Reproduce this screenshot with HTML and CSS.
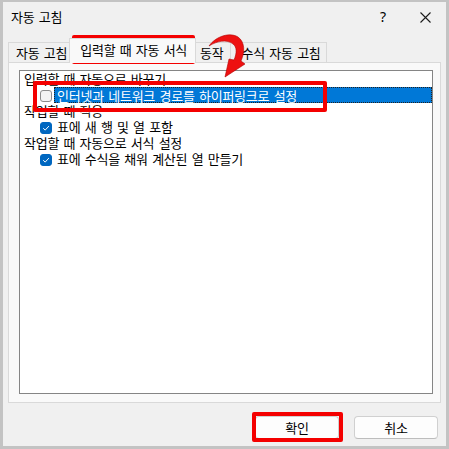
FILE: index.html
```html
<!DOCTYPE html>
<html lang="ko">
<head>
<meta charset="utf-8">
<title>자동 고침</title>
<link rel="stylesheet" href="styles.css">
</head>
<body>
<div class="frame">
  <div class="window">
    <div class="titlebar">
      <span class="title">자동 고침</span>
      <span class="help">?</span>
      <svg class="close" width="11" height="11" viewBox="0 0 11 11"><path d="M0.5 0.5 L10.5 10.5 M10.5 0.5 L0.5 10.5" stroke="#1a1a1a" stroke-width="1.1" fill="none"/></svg>
    </div>
    <div class="tabs">
      <div class="tab">자동 고침</div>
      <div class="tab active">입력할 때 자동 서식</div>
      <div class="tab">동작</div>
      <div class="tab">수식 자동 고침</div>
    </div>
    <div class="panel">
      <div class="list">
        <div class="row head">입력할 때 자동으로 바꾸기</div>
        <div class="row item">
          <span class="cb"></span>
          <span class="label selected">인터넷과 네트워크 경로를 하이퍼링크로 설정</span>
        </div>
        <div class="row head">작업할 때 적용</div>
        <div class="row item">
          <span class="cb checked"><svg width="12" height="12" viewBox="0 0 12 12"><path d="M3.2 6.2 L5.2 8.1 L8.9 4.1" stroke="#fff" stroke-width="1" fill="none"/></svg></span>
          <span class="label">표에 새 행 및 열 포함</span>
        </div>
        <div class="row head">작업할 때 자동으로 서식 설정</div>
        <div class="row item">
          <span class="cb checked"><svg width="12" height="12" viewBox="0 0 12 12"><path d="M3.2 6.2 L5.2 8.1 L8.9 4.1" stroke="#fff" stroke-width="1" fill="none"/></svg></span>
          <span class="label">표에 수식을 채워 계산된 열 만들기</span>
        </div>
      </div>
    </div>
    <div class="footer">
      <button class="btn">확인</button>
      <button class="btn">취소</button>
    </div>
  </div>
  <div class="mark mark-tab"></div>
  <div class="mark mark-row"></div>
  <div class="mark mark-ok"></div>
  <svg class="arrow" width="449" height="449" viewBox="0 0 449 449">
    <path d="M209 46 C216 36 230 32 238 37 C245 42 245 52 241 61 L245 64 L225 77 L229 59 L234 60 C237 53 237 47 233 44 C227 39 217 41 209 46 Z" fill="#ee1111" stroke="#b00000" stroke-width="0.6"/>
  </svg>
</div>
</body>
</html>
```

FILE: styles.css
```css
* { box-sizing: border-box; }
html, body { margin: 0; padding: 0; }
body {
  background: #c3c3c3;
  font-family: "Noto Sans CJK KR", "Noto Sans", sans-serif;
  font-size: 13px;
  letter-spacing: -0.25px;
  word-spacing: 1px;
  color: #000;
}
.frame {
  position: relative;
  width: 449px;
  height: 449px;
  padding: 2px 3px 3px 3px;
  background: #c3c3c3;
}
.window {
  width: 443px;
  height: 444px;
  background: #f0f0f0;
  display: flex;
  flex-direction: column;
}
.titlebar {
  height: 30px;
  display: flex;
  align-items: center;
  padding-left: 8px;
  line-height: 16px;
}
.help {
  margin-left: auto;
  font-family: "Noto Sans", sans-serif;
  font-size: 14px;
  letter-spacing: 0;
}
.close { margin-left: 34px; margin-right: 15px; display: block; }
.tabs {
  margin-top: 6px;
  height: 24px;
  display: flex;
  align-items: flex-end;
  padding-left: 5px;
}
.tab {
  height: 20px;
  line-height: 19px;
  padding: 0 4px 0 7px;
  border: 1px solid #d9d9d9;
  border-bottom: none;
  border-right: none;
  background: #f0f0f0;
  white-space: nowrap;
}
.tab:last-child { border-right: 1px solid #d9d9d9; padding: 0 5px 0 11px; }
.tab.active {
  height: 25px;
  margin: 0 -1px -1px -2px;
  padding: 0 8px 0 10px;
  line-height: 22px;
  background: #f9f9f9;
  border-right: 1px solid #d9d9d9;
  position: relative;
  z-index: 1;
}
.tab.active + .tab { border-left: none; padding-left: 5px; padding-right: 6px; }
.panel {
  margin: 0 5px;
  height: 341px;
  border: 1px solid #d9d9d9;
  background: #f9f9f9;
  padding: 7px 7px 8px 10px;
  display: flex;
}
.list {
  flex: 1;
  border: 1px solid #858585;
  background: #fff;
}
.row {
  height: 16px;
  line-height: 16px;
  display: flex;
  align-items: center;
  white-space: nowrap;
}
.row.head { padding-left: 4px; }
.row.item { padding-left: 20px; }
.cb {
  width: 12px;
  height: 12px;
  border: 1px solid #8c8c8c;
  border-radius: 3px;
  background: #f3f3f3;
  flex: none;
  margin-top: 1px;
}
.cb svg { display: block; margin: -1px; }
.cb.checked { background: #0067c0; border-color: #0067c0; }
.label {
  margin-left: 2px;
  padding-left: 3px;
  height: 16px;
  line-height: 15px;
}
.label.selected {
  flex: 1;
  background: #0078d7;
  color: #fff;
  border: 1px dotted #222;
  padding-left: 2px;
}
.footer {
  flex: 1;
  display: flex;
  justify-content: flex-end;
  align-items: flex-start;
  padding: 13px 8px 0 0;
  gap: 15px;
}
.btn {
  width: 84px;
  height: 23px;
  background: #fdfdfd;
  border: 1px solid #d0d0d0;
  border-bottom-color: #bdbdbd;
  border-radius: 4px;
  font-family: "Noto Sans CJK KR", sans-serif;
  font-size: 13px;
  letter-spacing: -0.25px;
  color: #000;
  padding: 0;
  line-height: 20px;
}
.mark {
  position: absolute;
  border: 4px solid #f40000;
  border-radius: 2px;
}
.mark-tab { left: 72px; top: 35px; width: 123px; height: 29px; }
.mark-row { left: 33px; top: 81px; width: 294px; height: 31px; }
.mark-ok { left: 252px; top: 412px; width: 91px; height: 30px; }
.arrow { position: absolute; left: 0; top: 0; pointer-events: none; }
```
